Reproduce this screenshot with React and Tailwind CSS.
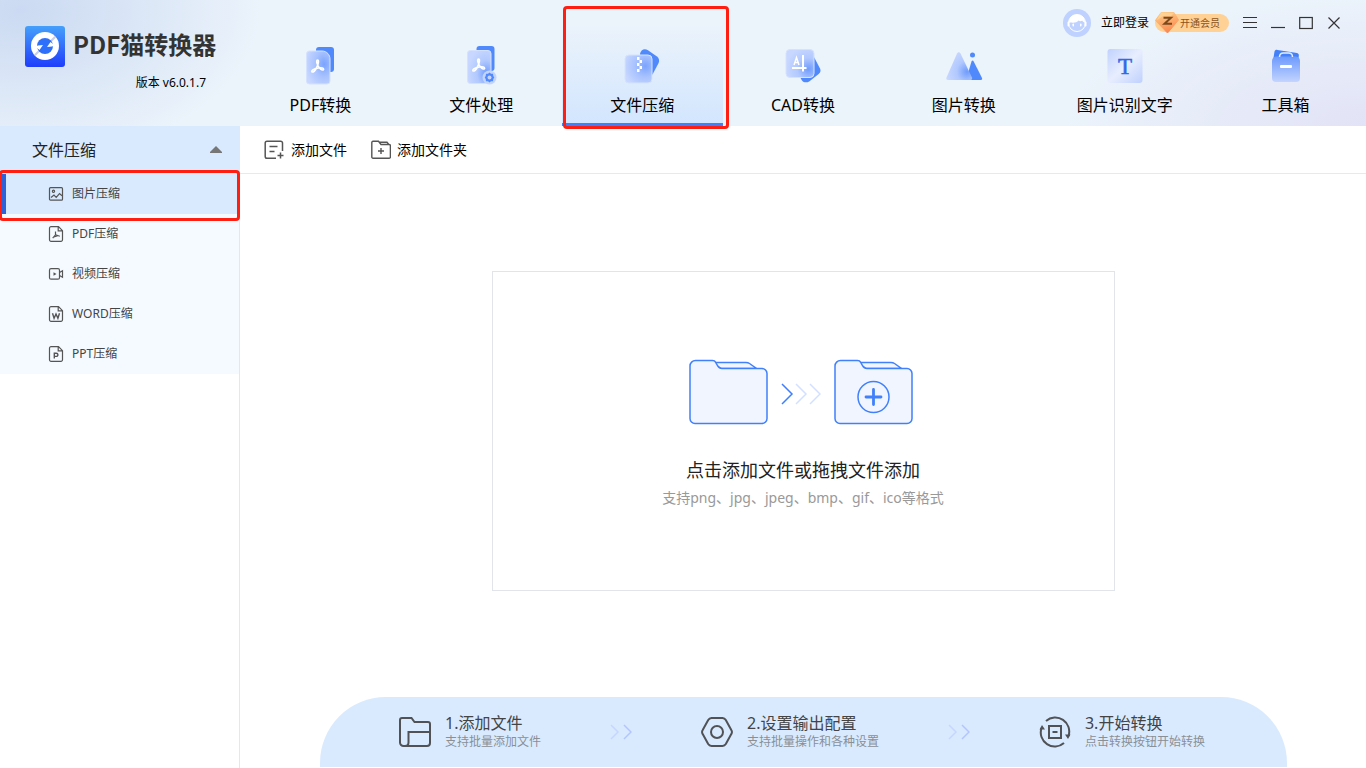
import React, { useState } from "react";

const PdfMark = ({ className }) => (
  <path
    className={className}
    d="M0 -6.5c1.6 0 .9 3.2 0 5.6c-1 2.6-2.6 5.6-4.3 6.3c-1.6.5-1.9-1-.5-2c1.700-1.200 4.500-2 7-2.200c2-.1 3.900.2 3.900 1.500c0 1.200-1.800 1-3-.1c-1.500-1.300-3-3.500-3.500-5.500c-.5-1.700-.7-3.600.4-3.600z"
  />
);

const Gradients = () => (
  <svg className="absolute h-0 w-0" aria-hidden="true">
    <defs>
      <radialGradient id="glass" cx="0.75" cy="0.4" r="0.8">
        <stop offset="0" stopColor="#7ba4fd" />
        <stop offset="0.5" stopColor="#a9c3fe" />
        <stop offset="1" stopColor="#c7d7ff" />
      </radialGradient>
      <radialGradient id="glassLow" cx="0.8" cy="0.7" r="0.8">
        <stop offset="0" stopColor="#6f9cfc" />
        <stop offset="0.5" stopColor="#b2c9fe" />
        <stop offset="1" stopColor="#c7d7ff" />
      </radialGradient>
      <linearGradient id="sheen" x1="0" y1="0" x2="1" y2="1">
        <stop offset="0" stopColor="#c0d1fe" />
        <stop offset="0.5" stopColor="#e8eefe" />
        <stop offset="1" stopColor="#bfd0fe" />
      </linearGradient>
      <linearGradient id="bag" x1="0" y1="0" x2="0" y2="1">
        <stop offset="0" stopColor="#6c9afc" />
        <stop offset="1" stopColor="#c3d4ff" />
      </linearGradient>
      <linearGradient id="logo" x1="0" y1="0" x2="0" y2="1">
        <stop offset="0" stopColor="#45a0fa" />
        <stop offset="1" stopColor="#1f3dfb" />
      </linearGradient>
      <linearGradient id="gem" x1="0" y1="0" x2="0.3" y2="1">
        <stop offset="0" stopColor="#ffd08a" />
        <stop offset="1" stopColor="#fb8a52" />
      </linearGradient>
    </defs>
  </svg>
);

const NavPdf = () => (
  <svg width="40" height="40" viewBox="0 0 40 40" aria-hidden="true">
    <rect x="16" y="2" width="18" height="25" rx="3" fill="#5089fb" />
    <path d="M9 6h13c5 0 8 4 8 8v22a3 3 0 0 1-3 3H9.500a3 3 0 0 1-3-3V9a3 3 0 0 1 2.500-3z" fill="url(#glass)" stroke="#d5e2ff" />
    <g transform="translate(17.500 21.500)" fill="none" stroke="#fff" strokeWidth="1.600">
      <PdfMark />
    </g>
  </svg>
);

const NavProcess = () => (
  <svg width="40" height="40" viewBox="0 0 40 40" aria-hidden="true">
    <rect x="15.500" y="1" width="18" height="25" rx="3" fill="#5089fb" />
    <rect x="6.500" y="5.500" width="23.500" height="33" rx="3" fill="url(#glassLow)" stroke="#d5e2ff" />
    <g transform="translate(17.500 20.500)" fill="none" stroke="#fff" strokeWidth="1.600">
      <PdfMark />
    </g>
    <circle cx="28.500" cy="32.500" r="7" fill="#c3d5ff" />
    <path d="M25 28.800h2l1.500-1.300 1.500 1.300h2l.3 2.200 1 1.500-1 1.500-.3 2.200h-2l-1.500 1.300-1.500-1.300h-2l-.3-2.200-1-1.500 1-1.500z" fill="#5089fb" />
    <circle cx="28.500" cy="32.500" r="2" fill="#c3d5ff" />
  </svg>
);

const NavZip = () => (
  <svg width="40" height="40" viewBox="0 0 40 40" aria-hidden="true">
    <path d="M18 8.500c1.200-4 4.500-5.400 8-3.300l9 6.300c2 1.500 2.700 4 1.600 6.500l-6.100 11.500H20z" fill="#5089fb" />
    <rect x="3" y="10" width="27" height="28" rx="4" fill="url(#glass)" stroke="#d5e2ff" />
    <path d="M15 12h2.500v3H15zM17.500 15h2.500v3h-2.500zM15 18h2.500v3H15zM17.500 21h2.500v3h-2.500zM15 24h2.500v3H15z" fill="#fff" />
  </svg>
);

const NavCad = () => (
  <svg width="40" height="40" viewBox="0 0 40 40" aria-hidden="true">
    <path d="M17 32V14l14-2 6 11.500c1 2 .5 4-1.300 5.500l-9.500 7.500c-2.500 1.500-6 1-7.200-1z" fill="#5089fb" />
    <rect x="3" y="4.500" width="28" height="28" rx="4" fill="url(#glassLow)" stroke="#d5e2ff" />
    <path d="M20 10v16.500M9 23h14.500" stroke="#fff" strokeWidth="2" fill="none" />
    <path d="M11 20l2.500-7.500L16 20M12 17.500h3" stroke="#fff" strokeWidth="1.500" fill="none" />
  </svg>
);

const NavImage = () => (
  <svg width="40" height="40" viewBox="0 0 40 40" aria-hidden="true">
    <circle cx="28.500" cy="10" r="2.500" fill="#5089fb" />
    <path d="M27.500 16.500c.7-1.200 1.500-1.200 2.200 0L38 33c.4 1 0 2-1.200 2H22z" fill="#5089fb" />
    <path d="M13 8.500c1-1.700 2.600-1.700 3.500 0L28 32.500c.4 1.500 0 2.500-1.500 2.500H4c-1.500 0-2-1.200-1.500-2.500z" fill="url(#glassLow)" />
  </svg>
);

const NavOcr = () => (
  <svg width="40" height="40" viewBox="0 0 40 40" aria-hidden="true">
    <rect x="2.500" y="4" width="35" height="34" rx="3" fill="url(#sheen)" />
    <text x="20" y="29" textAnchor="middle" fontFamily="Liberation Serif, serif" fontSize="23" fill="#2f6be6" stroke="#2f6be6" strokeWidth=".6">
      T
    </text>
  </svg>
);

const NavTools = () => (
  <svg width="40" height="40" viewBox="0 0 40 40" aria-hidden="true">
    <path d="M8.500 6.500C9 5 10 4.600 11.500 4.900L31 8c1.500.3 2 1.500 1.800 3L32 16H7z" fill="#4480f8" />
    <path d="M6 16c0-3 2-4.500 4.500-4.500h19c2.500 0 4.500 1.500 4.500 4.500v17a4 4 0 0 1-4 4H10a4 4 0 0 1-4-4z" fill="url(#bag)" />
    <path d="M13.500 12c0-3 1.500-4 4-4h5c2.500 0 4 1 4 4" fill="none" stroke="#e3ecff" strokeWidth="1.500" />
    <rect x="14" y="20" width="12" height="3" rx="1" fill="#fff" />
  </svg>
);

const SideIcon = ({ children }) => (
  <svg width="16" height="16" viewBox="0 0 16 16" fill="none" stroke="#555" strokeWidth="1.200" aria-hidden="true">
    {children}
  </svg>
);

const pageOutline = "M3.500.700h7l4 4v9.100a1.500 1.500 0 0 1-1.500 1.500H3A1.500 1.500 0 0 1 1.500 13.800V2.200A1.500 1.500 0 0 1 3 .7zM10.200.900v4h4";

const sideItems = [
  {
    label: "图片压缩",
    icon: (
      <SideIcon>
        <rect x="1.500" y="1.700" width="13" height="12.500" rx="1" />
        <circle cx="5.500" cy="5.300" r="1.100" />
        <path d="M3 11.500l3-2.500 2.200 2.300L11.500 7.500l2.500 2.200" />
      </SideIcon>
    ),
  },
  {
    label: "PDF压缩",
    icon: (
      <SideIcon>
        <path d={pageOutline} />
        <path d="M7.500 5.500v3.300l-2.800 3.400M7.500 8.800l4.300 1.500M5.200 11.200l4.500-1.500" />
      </SideIcon>
    ),
  },
  {
    label: "视频压缩",
    icon: (
      <SideIcon>
        <rect x="1.500" y="2.700" width="10" height="10.500" rx="1.500" />
        <path d="M5.500 6.200v3.600l3-1.800z" fill="#555" stroke="none" />
        <path d="M11.500 6.500l3-1.800v6.600l-3-1.800" />
      </SideIcon>
    ),
  },
  {
    label: "WORD压缩",
    icon: (
      <SideIcon>
        <path d={pageOutline} />
        <path d="M4.500 7.200l1.600 5L8 8l1.900 4.200 1.600-5" strokeWidth="1.400" />
      </SideIcon>
    ),
  },
  {
    label: "PPT压缩",
    icon: (
      <SideIcon>
        <path d={pageOutline} />
        <path d="M6.300 12.500V7.200h2a1.600 1.600 0 0 1 0 3.200h-2" strokeWidth="1.400" />
      </SideIcon>
    ),
  },
];

const tabs = [
  { label: "PDF转换", icon: <NavPdf /> },
  { label: "文件处理", icon: <NavProcess /> },
  { label: "文件压缩", icon: <NavZip /> },
  { label: "CAD转换", icon: <NavCad /> },
  { label: "图片转换", icon: <NavImage /> },
  { label: "图片识别文字", icon: <NavOcr /> },
  { label: "工具箱", icon: <NavTools /> },
];

const Logo = () => (
  <svg width="40" height="41" viewBox="0 0 40 41" aria-hidden="true">
    <rect width="40" height="41" rx="3" fill="url(#logo)" />
    <circle cx="20" cy="20" r="14" fill="#fff" />
    <path d="M25 14.500l4.500-4.500 1.500 1.500-4.500 4.500zM9 28.500l4.500-4.500 1.500 1.500-4.500 4.500z" fill="#c9cfe6" />
    <circle cx="20" cy="20" r="8" fill="#2f70fa" />
    <path d="M10 20.500l3-1 5-.5-3.500 5zM30 19.500l-3 1-5 .5 3.500-5z" fill="#fff" />
  </svg>
);

const Avatar = () => (
  <svg width="28" height="28" viewBox="0 0 28 28" aria-hidden="true">
    <circle cx="14" cy="14" r="14" fill="#bed1ff" />
    <circle cx="14" cy="14" r="8.500" fill="#bed1ff" stroke="#fff" />
    <path d="M6 13.500C5.800 8.500 9 5.500 14 5.500s8.200 3 8 8c-1.500-.2-2.300-.8-2.800-2-1 1-2.700.8-3.700 0-1.500 2-4.500 2.500-7 2-.8-.2-1.700.3-2.500 0z" fill="#fff" />
    <rect x="4.500" y="12.500" width="2" height="5" rx="1" fill="#fff" />
    <rect x="21.500" y="12.500" width="2" height="5" rx="1" fill="#fff" />
    <rect x="9.500" y="14.500" width="1.500" height="3" rx=".7" fill="#fff" />
    <rect x="17" y="14.500" width="1.500" height="3" rx=".7" fill="#fff" />
  </svg>
);

const Gem = () => (
  <svg width="24" height="22" viewBox="0 0 24 22" aria-hidden="true">
    <path d="M6 .5h13L23.500 8 12.500 21 .5 8.500z" fill="url(#gem)" stroke="url(#gem)" strokeLinejoin="round" />
    <path d="M6 1h13l-3 3H8L1.500 8.500z" fill="#ffdca5" opacity=".6" />
    <path d="M8.500 5.800h7.500l-6.500 6h7.500" fill="none" stroke="#7a4a1c" strokeWidth="2" />
  </svg>
);

const WindowButton = ({ label, children }) => (
  <button type="button" aria-label={label}>
    <svg width="14" height="14" viewBox="0 0 14 14" fill="none" stroke="#333" strokeWidth="1.200" aria-hidden="true">
      {children}
    </svg>
  </button>
);

const Folder = ({ plus }) => (
  <svg width="79" height="66" viewBox="0 0 79 66" fill="#f0f5ff" stroke="#4080fa" strokeWidth="1.500" aria-hidden="true">
    <path d="M24 3.500h33c1.500 0 2.500.3 3.500 1l7 5H32z" />
    <path d="M1 7a5.500 5.500 0 0 1 5.500-5.500h17c1.500 0 2.500.5 3.200 1.800l2 3.700c1 1.800 2.300 2.500 4.300 2.500h40a5 5 0 0 1 5 5v45a5 5 0 0 1-5 5H6a5 5 0 0 1-5-5z" />
    {plus && (
      <>
        <circle cx="39.500" cy="38" r="15.500" />
        <path d="M39.500 30.500v15M32 38h15" strokeWidth="2.800" strokeLinecap="round" />
      </>
    )}
  </svg>
);

const StepArrows = () => (
  <svg width="22" height="16" viewBox="0 0 22 16" fill="none" strokeWidth="1.500" aria-hidden="true">
    <path d="M1 1l7 7-7 7" stroke="#c6d6ff" />
    <path d="M14 1l7 7-7 7" stroke="#b3c5ff" />
  </svg>
);

const Step = ({ icon, title, text }) => (
  <li className="flex items-center gap-[14px]">
    <svg width="32" height="32" viewBox="0 0 32 32" fill="none" stroke="#505256" strokeWidth="2" aria-hidden="true">
      {icon}
    </svg>
    <div className="whitespace-nowrap">
      <p className="text-base leading-5 text-[#444]">{title}</p>
      <p className="text-xs leading-[18px] text-[#8a8f96]">{text}</p>
    </div>
  </li>
);

const App = () => {
  const [tab, setTab] = useState("文件压缩");
  const [item, setItem] = useState("图片压缩");

  return (
    <div className="flex min-h-screen flex-col bg-white font-['Noto_Sans','Noto_Sans_CJK_SC',sans-serif] text-black">
      <Gradients />
      {/* header */}
      <header className="relative flex h-[126px] bg-[#ebf3fb] bg-[radial-gradient(ellipse_240px_150px_at_20px_10px,#cbdaf2,transparent),radial-gradient(ellipse_300px_130px_at_100%_100%,#e2e3f6,transparent)]">
        <div className="w-60 shrink-0 pt-[26px] pl-[25px]">
          <div className="flex items-start gap-2">
            <Logo />
            <h1 className="font-['Noto_Sans_CJK_SC',sans-serif] text-2xl leading-9 font-bold whitespace-nowrap text-[#333]">PDF猫转换器</h1>
          </div>
          <p className="mt-2 pr-[34px] text-right text-xs leading-4">版本 v6.0.1.7</p>
        </div>
        <nav className="flex flex-1">
          {tabs.map((t) => (
            <button
              key={t.label}
              type="button"
              onClick={() => setTab(t.label)}
              className={
                t.label === tab
                  ? "relative flex flex-1 flex-col items-center justify-end gap-2 border-b-3 border-[#4080fa] bg-linear-to-b from-transparent from-20% to-[#d3e6fe] pb-[6px]"
                  : "flex flex-1 flex-col items-center justify-end gap-2 pb-[9px]"
              }
            >
              {t.icon}
              <span className="text-base leading-6 whitespace-nowrap">{t.label}</span>
              {t.label === tab && (
                <span className="pointer-events-none absolute top-[6px] -right-[6px] -bottom-[6px] left-px z-10 rounded-sm border-3 border-[#ff1f12]" />
              )}
            </button>
          ))}
        </nav>
        {/* account and window buttons sit above the tabs */}
        <div className="absolute top-2 right-[25px] flex h-[30px] items-center gap-[14px]">
          <div className="flex items-center">
            <Avatar />
            <a href="#login" className="ml-[10px] text-xs leading-4">
              立即登录
            </a>
            <button type="button" className="relative ml-[6px] h-[18px] w-[74px] rounded-full bg-[#ffd195] pl-[25px] text-left text-[10px] leading-[18px] whitespace-nowrap text-[#8a5320]">
              <span className="absolute -top-[2px] left-0">
                <Gem />
              </span>
              开通会员
            </button>
          </div>
          <WindowButton label="菜单">
            <path d="M0 1.500h14M0 6.500h14M0 11.500h14" />
          </WindowButton>
          <WindowButton label="最小化">
            <path d="M0 11.500h14" />
          </WindowButton>
          <WindowButton label="最大化">
            <rect x=".7" y="1.500" width="12.600" height="11" />
          </WindowButton>
          <WindowButton label="关闭">
            <path d="M1.500 1.500l11 11M12.500 1.500l-11 11" />
          </WindowButton>
        </div>
      </header>

      <div className="flex flex-1">
        {/* sidebar */}
        <aside className="w-60 shrink-0 border-r border-[#dfe8fa]">
          <button type="button" className="flex h-12 w-full items-center justify-between bg-[#d9eaff] pr-[17px] pl-8 text-base text-[#222]">
            文件压缩
            <svg width="12" height="8" viewBox="0 0 12 8" aria-hidden="true">
              <path d="M6 0l6 6v1H0V6z" fill="#777" />
            </svg>
          </button>
          <ul className="bg-[#f4faff]">
            {sideItems.map((s) => (
              <li key={s.label} className="relative">
                <button
                  type="button"
                  onClick={() => setItem(s.label)}
                  className={
                    s.label === item
                      ? "flex h-10 w-full items-center gap-2 border-l-6 border-[#2f62d9] bg-[#d9eaff] pl-[42px] text-xs text-[#444]"
                      : "flex h-10 w-full items-center gap-2 pl-12 text-xs text-[#444]"
                  }
                >
                  {s.icon}
                  {s.label}
                </button>
                {s.label === item && (
                  <span className="pointer-events-none absolute -top-1 -right-px -bottom-[7px] -left-px z-10 rounded-sm border-3 border-[#ff1f12]" />
                )}
              </li>
            ))}
          </ul>
        </aside>

        {/* content */}
        <main className="flex flex-1 flex-col">
          <div className="flex h-12 items-center gap-6 border-b border-[#e2eaf8] pl-6 text-sm">
            <button type="button" className="flex items-center gap-[7px]">
              <svg width="20" height="20" viewBox="0 0 20 20" fill="none" stroke="#555" strokeWidth="1.500" aria-hidden="true">
                <path d="M18.500 11V3a1.800 1.800 0 0 0-1.800-1.800H3A1.800 1.800 0 0 0 1.200 3v13.500A1.800 1.800 0 0 0 3 18.300h9M5.500 6.500h8M5.500 11.500h5" />
                <path d="M16.500 12.500v6M13.500 15.500h6" />
              </svg>
              添加文件
            </button>
            <button type="button" className="flex items-center gap-[6px]">
              <svg width="20" height="20" viewBox="0 0 20 20" fill="none" stroke="#555" strokeWidth="1.400" aria-hidden="true">
                <path d="M.8 2.500A1.200 1.200 0 0 1 2 1.300h5.500l2.500 3.200h8.200a1.200 1.200 0 0 1 1.200 1.200V17a1.200 1.200 0 0 1-1.200 1.200H2A1.200 1.200 0 0 1 .8 17zM8.500 2.200H16l1.800 2.200M10 8v6M7 11h6" />
              </svg>
              添加文件夹
            </button>
          </div>

          <div className="flex flex-1 items-center justify-center pb-[10px]">
            <button type="button" className="flex h-80 w-[623px] max-w-full flex-col items-center border border-[#e1e4ea] pt-[87px]">
              <span className="flex items-center gap-[13px] pr-1">
                <Folder />
                <svg width="40" height="26" viewBox="0 0 40 26" fill="none" strokeWidth="1.500" aria-hidden="true">
                  <path d="M1 5l10 10L1 25" stroke="#4080fa" />
                  <path d="M15 5l10 10-10 10M29 5l10 10-10 10" stroke="#d3e0ff" />
                </svg>
                <Folder plus />
              </span>
              <span className="mt-[31px] text-lg leading-7 text-[#222]">点击添加文件或拖拽文件添加</span>
              <span className="text-sm leading-7 text-[#999]">支持png、jpg、jpeg、bmp、gif、ico等格式</span>
            </button>
          </div>

          {/* steps */}
          <ol className="mr-[79px] mb-px ml-20 flex h-[70px] items-center justify-between rounded-t-[66px] bg-[#d9eaff] pr-[82px] pl-[79px]">
            <Step
              title="1.添加文件"
              text="支持批量添加文件"
              icon={
                <path d="M1 4a2 2 0 0 1 2-2h9.500l3 4H29a2 2 0 0 1 2 2v19a3 3 0 0 1-3 3H4.500A3.500 3.500 0 0 1 1 26.500zM31 16H9.500v10.500c0 2-1.500 3.500-3.500 3.500" />
              }
            />
            <li aria-hidden="true">
              <StepArrows />
            </li>
            <Step
              title="2.设置输出配置"
              text="支持批量操作和各种设置"
              icon={
                <>
                  <path d="M10.500 2h11a4 4 0 0 1 3.300 1.900l5.500 10a4 4 0 0 1 0 4.200l-5.500 10a4 4 0 0 1-3.300 1.900h-11a4 4 0 0 1-3.300-1.900l-5.500-10a4 4 0 0 1 0-4.200l5.500-10A4 4 0 0 1 10.500 2z" />
                  <circle cx="16" cy="16" r="6" />
                </>
              }
            />
            <li aria-hidden="true">
              <StepArrows />
            </li>
            <Step
              title="3.开始转换"
              text="点击转换按钮开始转换"
              icon={
                <>
                  <path d="M7 5A14 14 0 0 1 29.500 20M25 27A14 14 0 0 1 2.500 12" />
                  <path d="M26 18.500l5.500 0-2.500 4.500zM.5 13.500L3 9l3 4.500z" fill="#505256" stroke="none" />
                  <rect x="10" y="10" width="12" height="12" />
                  <path d="M13.500 16h5" />
                </>
              }
            />
          </ol>
        </main>
      </div>
    </div>
  );
};

export default App;
